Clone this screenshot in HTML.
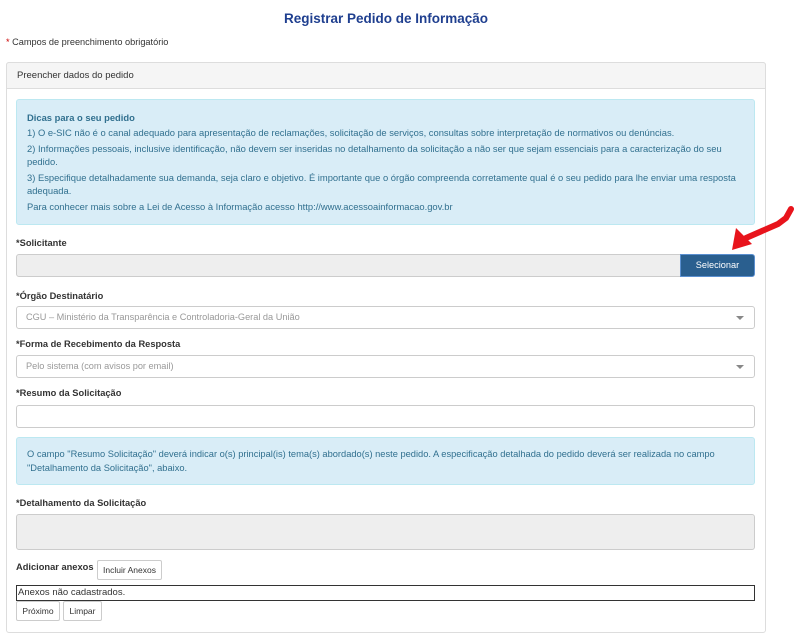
<!DOCTYPE html>
<html><head><meta charset="utf-8"><style>
*{box-sizing:border-box;margin:0;padding:0}
body{width:800px;height:638px;background:#fff;font-family:"Liberation Sans",sans-serif;font-size:10px;color:#333;position:relative;overflow:hidden}
.a{position:absolute}
.title{left:0;width:772px;top:11px;text-align:center;font-size:13.5px;font-weight:bold;color:#1f3f8f}
.panel{left:6px;top:62px;width:760px;height:571px;border:1px solid #ddd;border-radius:3px}
.ph{left:6px;top:62px;width:760px;height:27px;background:#f5f5f5;border:1px solid #ddd;border-radius:3px 3px 0 0;padding:7px 10px;font-size:9.5px}
.alert{background:#d9edf7;border:1px solid #bce8f1;border-radius:3px;color:#31708f;font-size:9.3px}
.lbl{font-weight:bold;font-size:9.3px;color:#333}
.inp{border:1px solid #ccc;border-radius:3px;background:#fff}
.sel{color:#999;font-size:9.2px;padding:5px 9px}
.caret{position:absolute;right:10px;top:9px;width:0;height:0;border-left:4px solid transparent;border-right:4px solid transparent;border-top:4px solid #888}
.btn{border:1px solid #ccc;border-radius:2px;background:#fff;font-size:8.5px;text-align:center;line-height:18px}
</style></head><body>
<div class="a title">Registrar Pedido de Informação</div>
<div class="a" style="left:6px;top:37px;font-size:9.2px"><span style="color:#c00">*</span> Campos de preenchimento obrigatório</div>
<div class="a panel"></div>
<div class="a ph">Preencher dados do pedido</div>
<div class="a alert" style="left:16px;top:99px;width:739px;height:126px"></div>
<div class="a" style="left:27px;top:110px;color:#31708f;font-size:9.4px;line-height:15px;width:722px">
<div style="font-weight:bold">Dicas para o seu pedido</div>
<div>1) O e-SIC não é o canal adequado para apresentação de reclamações, solicitação de serviços, consultas sobre interpretação de normativos ou denúncias.</div>
<div style="line-height:13px;margin-top:2px">2) Informações pessoais, inclusive identificação, não devem ser inseridas no detalhamento da solicitação a não ser que sejam essenciais para a caracterização do seu<br>pedido.</div>
<div style="line-height:13px;margin-top:3px">3) Especifique detalhadamente sua demanda, seja claro e objetivo. É importante que o órgão compreenda corretamente qual é o seu pedido para lhe enviar uma resposta<br>adequada.</div>
<div style="margin-top:2px">Para conhecer mais sobre a Lei de Acesso à Informação acesso http://www.acessoainformacao.gov.br</div>
</div>
<div class="a lbl" style="left:16px;top:238px">*Solicitante</div>
<div class="a" style="left:16px;top:254px;width:665px;height:23px;background:#eee;border:1px solid #ccc;border-radius:3px 0 0 3px"></div>
<div class="a" style="left:680px;top:254px;width:75px;height:23px;background:#2a5f8f;border:1px solid #5a8fd0;border-radius:0 3px 3px 0;color:#fff;font-size:9.2px;text-align:center;line-height:21px">Selecionar</div>
<div class="a lbl" style="left:16px;top:291px">*Órgão Destinatário</div>
<div class="a inp sel" style="left:16px;top:306px;width:739px;height:23px">CGU – Ministério da Transparência e Controladoria-Geral da União<span class="caret"></span></div>
<div class="a lbl" style="left:16px;top:339px">*Forma de Recebimento da Resposta</div>
<div class="a inp sel" style="left:16px;top:355px;width:739px;height:23px">Pelo sistema (com avisos por email)<span class="caret"></span></div>
<div class="a lbl" style="left:16px;top:388px">*Resumo da Solicitação</div>
<div class="a inp" style="left:16px;top:405px;width:739px;height:23px"></div>
<div class="a alert" style="left:16px;top:437px;width:739px;height:48px;padding:9px 10px;line-height:14px">O campo "Resumo Solicitação" deverá indicar o(s) principal(is) tema(s) abordado(s) neste pedido. A especificação detalhada do pedido deverá ser realizada no campo<br>"Detalhamento da Solicitação", abaixo.</div>
<div class="a lbl" style="left:16px;top:498px">*Detalhamento da Solicitação</div>
<div class="a" style="left:16px;top:514px;width:739px;height:36px;background:#eee;border:1px solid #ccc;border-radius:3px"></div>
<div class="a lbl" style="left:16px;top:562px">Adicionar anexos</div>
<div class="a btn" style="left:97px;top:560px;width:65px;height:20px">Incluir Anexos</div>
<div class="a" style="left:16px;top:585px;width:739px;height:16px;border:1px solid #333;font-size:9.5px;line-height:14px;padding-left:1px">Anexos não cadastrados.</div>
<div class="a btn" style="left:16px;top:601px;width:44px;height:20px">Próximo</div>
<div class="a btn" style="left:63px;top:601px;width:39px;height:20px">Limpar</div>
<svg class="a" style="left:728px;top:200px" width="72" height="56"><path d="M63 9 L58 18 L50 24 L18 38" stroke="#e8141c" stroke-width="6" stroke-linecap="round" fill="none"/><polygon points="4,50 8,28 24,44" fill="#e8141c"/></svg>
</body></html>
